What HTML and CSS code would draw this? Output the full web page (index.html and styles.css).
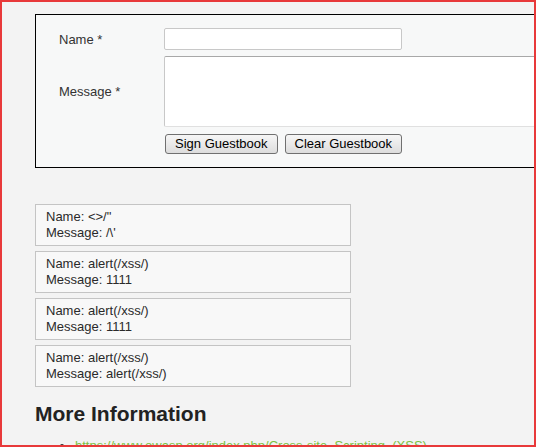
FILE: index.html
```html
<!DOCTYPE html>
<html>
<head>
<meta charset="utf-8">
<link rel="stylesheet" href="styles.css">
</head>
<body>
<div class="frame">
  <div class="content">
    <form class="guest-form">
      <div class="row">
        <label class="label">Name *</label>
        <input class="name-input" type="text">
      </div>
      <div class="row">
        <label class="label">Message *</label>
        <textarea class="msg-input"></textarea>
      </div>
      <div class="row">
        <span class="label"></span>
        <div class="buttons">
          <button type="button" class="btn">Sign Guestbook</button>
          <button type="button" class="btn">Clear Guestbook</button>
        </div>
      </div>
    </form>

    <div class="entries">
      <div class="entry">Name: &lt;&gt;/"<br>Message: /\'</div>
      <div class="entry">Name: alert(/xss/)<br>Message: 1111</div>
      <div class="entry">Name: alert(/xss/)<br>Message: 1111</div>
      <div class="entry">Name: alert(/xss/)<br>Message: alert(/xss/)</div>
    </div>

    <h2 class="more">More Information</h2>
    <ul class="links">
      <li><a href="#">https://www.owasp.org/index.php/Cross-site_Scripting_(XSS)</a></li>
    </ul>
  </div>
</div>
</body>
</html>
```

FILE: styles.css
```css
* { box-sizing: border-box; }
html, body {
  margin: 0;
  padding: 0;
  background: #f3f3f3;
}
.frame {
  width: 536px;
  height: 447px;
  border: 2px solid #e8393a;
  overflow: hidden;
  background: #f3f3f3;
  font-family: "Liberation Sans", Arial, sans-serif;
  font-size: 13px;
  color: #333;
}
.content {
  padding: 12px 0 0 33px;
}
.guest-form {
  width: 540px;
  border: 1px solid #000;
  background: #f7f8f8;
  padding: 13px 0 13px 23px;
  display: flex;
  flex-direction: column;
  gap: 6px;
}
.row {
  display: flex;
  align-items: center;
}
.row:last-child { margin-top: 1px; }
.label {
  width: 105px;
  flex: none;
  color: #333;
}
.name-input {
  width: 238px;
  height: 22px;
  border: 1px solid #c8c8c8;
  border-radius: 2px;
  background: #fff;
  margin: 0;
}
.msg-input {
  width: 400px;
  height: 71px;
  border: 1px solid #e0e0e0;
  border-top-color: #a8a8a8;
  border-left-color: #c8c8c8;
  border-radius: 2px;
  background: #fff;
  margin: 0;
  resize: none;
  display: block;
}
.buttons {
  display: flex;
  gap: 7px;
  padding-left: 1px;
}
.btn {
  height: 20px;
  padding: 0 9px;
  font-family: "Liberation Sans", Arial, sans-serif;
  font-size: 13px;
  color: #000;
  border: 1px solid #707070;
  border-radius: 3px;
  background: linear-gradient(#f6f6f6, #dddddd);
  margin: 0;
  line-height: 18px;
}
.entries {
  margin-top: 36px;
  display: flex;
  flex-direction: column;
  gap: 5px;
}
.entry {
  width: 316px;
  height: 42px;
  border: 1px solid #c4c4c4;
  background: #f8f8f8;
  padding: 4px 10px;
  line-height: 16px;
  color: #2a2a2a;
}
.more {
  margin: 14px 0 0 0;
  font-size: 21px;
  font-weight: bold;
  color: #222;
  line-height: 26px;
}
.links {
  margin: 11px 0 0 0;
  padding-left: 40px;
  color: #333;
}
.links a {
  color: #7bc142;
  text-decoration: none;
}
```
